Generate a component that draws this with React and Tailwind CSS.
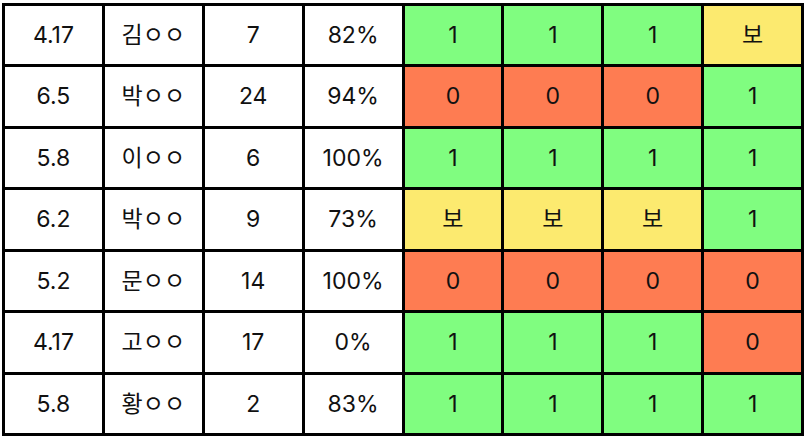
import React from 'react';

const rows = [
  ['4.17', '김ㅇㅇ', '7', '82%', ['1', '1', '1', '보']],
  ['6.5', '박ㅇㅇ', '24', '94%', ['0', '0', '0', '1']],
  ['5.8', '이ㅇㅇ', '6', '100%', ['1', '1', '1', '1']],
  ['6.2', '박ㅇㅇ', '9', '73%', ['보', '보', '보', '1']],
  ['5.2', '문ㅇㅇ', '14', '100%', ['0', '0', '0', '0']],
  ['4.17', '고ㅇㅇ', '17', '0%', ['1', '1', '1', '0']],
  ['5.8', '황ㅇㅇ', '2', '83%', ['1', '1', '1', '1']],
];

const markBg = {
  '1': 'bg-[#80fd80]',
  '0': 'bg-[#fe7c52]',
  '보': 'bg-[#fcea6f]',
};

const Cell = ({ children, className = 'bg-white' }) => (
  <div className={`flex items-center justify-center ${className}`}>{children}</div>
);

export default function App() {
  return (
    <div className="w-[809px] h-[438px] bg-white pt-[3px] pl-[2px]">
      <div
        className="grid grid-cols-8 grid-rows-7 gap-[3px] p-[3px] bg-black w-[802px] h-[433px] text-[23px] text-[#111] font-['Inter','Noto_Sans_CJK_KR',sans-serif]"
      >
        {rows.map((r, i) => (
          <React.Fragment key={i}>
            <Cell>{r[0]}</Cell>
            <Cell>{r[1]}</Cell>
            <Cell>{r[2]}</Cell>
            <Cell>{r[3]}</Cell>
            {r[4].map((m, j) => (
              <Cell key={j} className={markBg[m]}>{m}</Cell>
            ))}
          </React.Fragment>
        ))}
      </div>
    </div>
  );
}
